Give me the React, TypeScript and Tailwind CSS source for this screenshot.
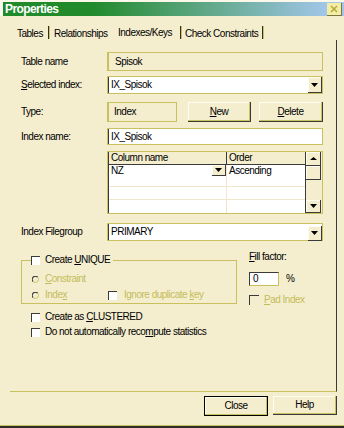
import React from "react";

const Check = ({ disabled }: { disabled?: boolean }) => (
	<span
		className={
			disabled
				? "block w-[10px] h-[10px] shrink-0 border-t border-l border-[#3a3a3a]"
				: "block w-[9px] h-[9px] shrink-0 bg-white border-t border-l border-[#3a3a3a]"
		}
	/>
);

const Radio = () => (
	<svg width="7" height="7" viewBox="0 0 7 7" className="shrink-0">
		<path d="M5.6 1.2 A3 3 0 0 0 1.2 5.6" stroke="#3a3a3a" strokeWidth="1.2" fill="none" />
		<path d="M5.6 1.2 A3 3 0 0 1 1.2 5.6" stroke="#c9c15e" strokeWidth="1" fill="none" />
	</svg>
);

const DropBtn = ({ className }: { className: string }) => (
	<div
		className={
			"flex items-center justify-center bg-[#f4eecf] border-r border-b border-[#3a3a3a] shadow-[inset_1px_1px_0_#fffdf0] " +
			className
		}
	>
		<svg width="7" height="4" viewBox="0 0 7 4">
			<path d="M0 0h7L3.5 4z" fill="#000" />
		</svg>
	</div>
);

const Btn = ({ children, className }: { children: React.ReactNode; className: string }) => (
	<div
		className={
			"flex items-center justify-center bg-[#f4eecf] shadow-[inset_-1px_-1px_0_#c9c15e,inset_1px_1px_0_#fffdf0] " +
			className
		}
	>
		{children}
	</div>
);

const Sep = () => (
	<span className="w-[2px] h-[13px] self-center border-l border-r border-l-[#2e2e2e] border-r-[#c9c15e]" />
);

export default function App() {
	return (
		<div className="w-[344px] h-[428px] bg-[#f4eecf] overflow-hidden flex flex-col text-[10px] leading-[12px] tracking-[-0.5px] text-black font-['Liberation_Sans',Arial,sans-serif]">
			{/* title bar */}
			<div className="pt-[2px] pl-[3px] bg-[#fbf8ea]">
				<div className="h-[14px] flex items-center justify-between bg-[linear-gradient(to_right,#218a2b_26%,#a3c7ec_96%)]">
					<span className="pl-[2px] text-white font-bold text-[12px] tracking-[-0.6px]">
						Properties
					</span>
					<div className="w-[15px] h-[13px] mr-[2px] bg-[#f4eda6] border-r border-b border-[#7a7640] flex items-center justify-center">
						<svg width="8" height="8" viewBox="0 0 8 8">
							<path d="M1 1L7 7M7 1L1 7" stroke="#b3ab3a" strokeWidth="1.6" />
						</svg>
					</div>
				</div>
			</div>

			{/* tabs */}
			<div className="mt-[9px] h-[15px] flex">
				<div className="w-[48px] pl-[17px] pt-[2px] flex items-center">Tables</div>
				<Sep />
				<div className="w-[63px] pl-[4px] pt-[2px] flex items-center">Relationships</div>
				<div className="w-[67px] pl-[5px] flex items-center">Indexes/Keys</div>
				<Sep />
				<div className="w-[80px] pl-[3px] pt-[2px] flex items-center whitespace-nowrap">
					Check Constraints
				</div>
				<Sep />
			</div>

			{/* panel */}
			<div className="ml-[10px] w-[327px] h-[352px] pl-[11px] border-r border-b border-r-[#3a3a3a] border-b-[#c9c15e] flex flex-col">
				<div className="mt-[12px] h-[19px] flex items-center">
					<span className="w-[86px]">Table name</span>
					<div className="w-[216px] h-full flex items-center pl-[6px] border border-l-2 border-[#c9c15e]">
						Spisok
					</div>
				</div>

				<div className="mt-[5px] h-[18px] flex items-center">
					<span className="w-[86px]">
						<span className="underline">S</span>elected index:
					</span>
					<div className="w-[216px] h-full flex items-center justify-between pl-[3px] bg-white border border-[#c9c15e] shadow-[inset_1px_0_0_#3a3a3a]">
						<span>IX_Spisok</span>
						<DropBtn className="w-[14px] h-[16px]" />
					</div>
				</div>

				<div className="mt-[8px] h-[20px] flex items-center">
					<span className="w-[86px]">Type:</span>
					<div className="w-[70px] h-full flex items-center pl-[5px] border border-l-2 border-[#c9c15e]">
						Index
					</div>
					<Btn className="ml-[11px] w-[63px] h-full border-r border-b border-[#3a3a3a]">
						<span>
							<span className="underline">N</span>ew
						</span>
					</Btn>
					<Btn className="ml-[8px] w-[64px] h-full border-r border-b border-[#3a3a3a]">
						<span>
							<span className="underline">D</span>elete
						</span>
					</Btn>
				</div>

				<div className="mt-[6px] h-[17px] flex items-center">
					<span className="w-[86px]">Index name:</span>
					<div className="w-[216px] h-full flex items-center pl-[3px] bg-white border border-[#c9c15e] shadow-[inset_1px_0_0_#3a3a3a]">
						IX_Spisok
					</div>
				</div>

				{/* columns grid */}
				<div className="mt-[6px] ml-[86px] w-[216px] h-[63px] flex border border-[#c9c15e]">
					<div className="flex-1 flex flex-col bg-white border-l border-[#3a3a3a] border-r">
						<div className="h-[13px] flex bg-[#f4eecf] border-b border-[#3a3a3a]">
							<div className="w-[118px] pl-[2px] border-r border-[#3a3a3a]">Column name</div>
							<div className="flex-1 pl-[2px]">Order</div>
						</div>
						<div className="h-[22px] flex border-b border-[#efe7c8]">
							<div className="w-[118px] pl-[2px] flex justify-between items-start border-r border-[#efe7c8]">
								<span>NZ</span>
								<DropBtn className="w-[14px] h-[11px]" />
							</div>
							<div className="flex-1 pl-[2px]">Ascending</div>
						</div>
						<div className="h-[13px] flex border-b border-[#efe7c8]">
							<div className="w-[118px] border-r border-[#efe7c8]" />
						</div>
						<div className="flex-1 flex">
							<div className="w-[118px] border-r border-[#efe7c8]" />
						</div>
					</div>
					<div className="w-[15px] mr-[1px] flex flex-col">
						<div className="h-[14px] flex items-center justify-center border-r border-b border-[#3a3a3a] shadow-[inset_1px_1px_0_#fffdf0]">
							<svg width="7" height="3" viewBox="0 0 7 3">
								<path d="M0 3h7L3.5 0z" fill="#000" />
							</svg>
						</div>
						<div className="h-[14px] border-r border-b border-[#3a3a3a] shadow-[inset_1px_1px_0_#fffdf0]" />
						<div className="flex-1" />
						<DropBtn className="h-[13px]" />
					</div>
				</div>

				<div className="mt-[9px] h-[18px] flex items-center">
					<span className="w-[86px]">Index Filegroup</span>
					<div className="w-[216px] h-full flex items-center justify-between pl-[3px] bg-white border border-[#c9c15e] shadow-[inset_1px_0_0_#3a3a3a]">
						<span>PRIMARY</span>
						<DropBtn className="w-[14px] h-[15px] mt-[2px]" />
					</div>
				</div>

				{/* unique group + fill factor */}
				<div className="mt-[13px] flex items-start">
					<fieldset className="w-[216px] h-[50px] px-[9px] border border-[#c9c15e]">
						<legend className="flex items-center gap-[5px] pr-[3px] h-[12px]">
							<Check />
							<span>
								Create <span className="underline">U</span>NIQUE
							</span>
						</legend>
						<div className="pt-[7px] flex flex-col gap-[4px] text-[#c4bc5a]">
							<div className="h-[12px] flex items-center">
								<span className="ml-[1px] mr-[6px]">
									<Radio />
								</span>
								<span>
									<span className="underline">C</span>onstraint
								</span>
							</div>
							<div className="h-[12px] flex items-center">
								<div className="w-[77px] flex items-center">
									<span className="ml-[1px] mr-[6px]">
										<Radio />
									</span>
									<span>
										Inde<span className="underline">x</span>
									</span>
								</div>
								<Check />
								<span className="ml-[7px] whitespace-nowrap">
									Ignore duplicate <span className="underline">k</span>ey
								</span>
							</div>
						</div>
					</fieldset>
					<div className="ml-[12px] -mt-[3px] flex flex-col">
						<span>
							<span className="underline">F</span>ill factor:
						</span>
						<div className="mt-[9px] flex items-center">
							<div className="w-[30px] h-[14px] pl-[3px] flex items-center bg-white border-t border-l border-[#3a3a3a] border-r border-b border-r-[#c9c15e] border-b-[#c9c15e]">
								0
							</div>
							<span className="ml-[7px]">%</span>
						</div>
						<div className="mt-[8px] flex items-center">
							<Check disabled />
							<span className="ml-[5px] text-[#c4bc5a]">
								<span className="underline">P</span>ad Index
							</span>
						</div>
					</div>
				</div>

				<div className="mt-[5px] h-[12px] ml-[10px] flex items-center gap-[5px]">
					<Check />
					<span>
						Create as <span className="underline">C</span>LUSTERED
					</span>
				</div>
				<div className="mt-[3px] h-[12px] ml-[10px] flex items-center gap-[5px]">
					<Check />
					<span>
						Do not automatically reco<span className="underline">m</span>pute statistics
					</span>
				</div>
			</div>

			{/* dialog buttons */}
			<div className="mt-[4px] flex items-start">
				<Btn className="ml-[204px] w-[64px] h-[20px] border border-black">Close</Btn>
				<Btn className="ml-[5px] w-[64px] h-[19px] border-r border-b border-[#3a3a3a]">Help</Btn>
			</div>

			<div className="mt-auto h-[3px] border-t border-[#c9c15e] bg-[#2e2e2e]" />
		</div>
	);
}
